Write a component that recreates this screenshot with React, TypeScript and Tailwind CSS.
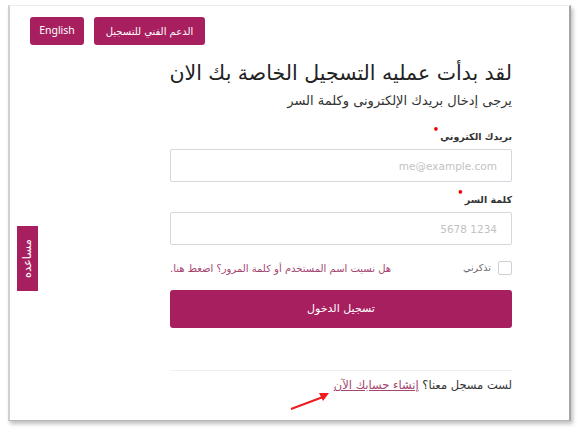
const brand = 'bg-[#a81f5f]'

function Field({ label, placeholder, className = '' }: { label: string; placeholder: string; className?: string }) {
  return (
    <div className={`flex flex-col ${className}`}>
      <label className="flex items-start text-[9.5px] font-semibold leading-[16px] text-[#333]">
        <span>{label}</span>
        <span className="mr-[1px] mt-[-4px] text-[10px] leading-none text-[#e00]">•</span>
      </label>
      <input
        dir="ltr"
        placeholder={placeholder}
        className="mt-[4px] h-[33px] w-full rounded-[2px] border border-[#d6d6dc] bg-white px-[14px] text-right text-[10.5px] text-[#555] placeholder:text-[#c2c2c2] outline-none"
      />
    </div>
  )
}

export default function App() {
  return (
    <div className="h-[433px] w-[580px] bg-white font-['DejaVu_Sans',sans-serif]">
      <div className="relative ml-[8px] pt-[5px]">
        <div className="relative flex h-[416px] w-[563px] flex-col border-y border-l-2 border-r-2 border-t-[#ececec] border-b-[#b5b5b5] border-l-[#d0d0d0] border-r-[#a5a5a5] bg-white shadow-[2px_3px_4px_rgba(0,0,0,0.25)]">
          <div className="flex gap-[10px] pl-[20px] pt-[11px]">
            <button className={`${brand} h-[28px] w-[54px] rounded-[3px] font-['Noto_Sans',sans-serif] text-[10.5px] text-white`}>English</button>
            <button className={`${brand} h-[28px] w-[111px] rounded-[3px] text-[10px] text-white`}>
              الدعم الفني للتسجيل
            </button>
          </div>

          <div dir="rtl" className="mr-[57px] flex w-[342px] flex-col self-end">
            <h1 className="mt-[13px] whitespace-nowrap text-[20.5px] font-normal leading-[30px] text-[#222]">
              لقد بدأت عمليه التسجيل الخاصة بك الان
            </h1>
            <p className="mt-[3px] text-[13px] leading-[20px] text-[#333]">يرجى إدخال بريدك الإلكترونى وكلمة السر</p>

            <Field className="mt-[18px]" label="بريدك الكتروني" placeholder="me@example.com" />
            <Field className="mt-[10px]" label="كلمة السر" placeholder="5678 1234" />

            <div className="mt-[15px] flex h-[16px] items-center justify-between">
              <label className="flex items-center gap-[7px] text-[9.5px] text-[#666]">
                <span className="h-[14px] w-[14px] rounded-[2px] border border-[#cfcfd6] bg-white" />
                تذكرني
              </label>
              <a className="text-[10px] text-[#a3456f]">هل نسيت اسم المستخدم أو كلمة المرور؟ اضغط هنا.</a>
            </div>

            <button className={`${brand} mt-[14px] h-[38px] w-full rounded-[3px] text-[11px] text-white`}>
              تسجيل الدخول
            </button>

            <div className="mt-[42px] h-px w-full bg-[#f0f0f0]" />

            <p className="mt-[5px] text-[11.5px] leading-[18px] text-[#333]">
              لست مسجل معنا؟{' '}
              <a className="text-[#a3456f] underline">إنشاء حسابك الآن</a>
            </p>
          </div>

          <div className={`${brand} absolute left-[7px] top-[220px] flex h-[65px] w-[21px] items-center justify-center`}>
            <span className="-rotate-90 whitespace-nowrap text-[11.5px] text-white">مساعده</span>
          </div>

          <svg className="absolute left-[278px] top-[384px]" width="44" height="24" viewBox="0 0 44 24">
            <line x1="3" y1="19" x2="35" y2="7" stroke="#ee1c1c" strokeWidth="2" />
            <polygon points="41,3 31,3 35,11" fill="#ee1c1c" />
          </svg>
        </div>
      </div>
    </div>
  )
}
